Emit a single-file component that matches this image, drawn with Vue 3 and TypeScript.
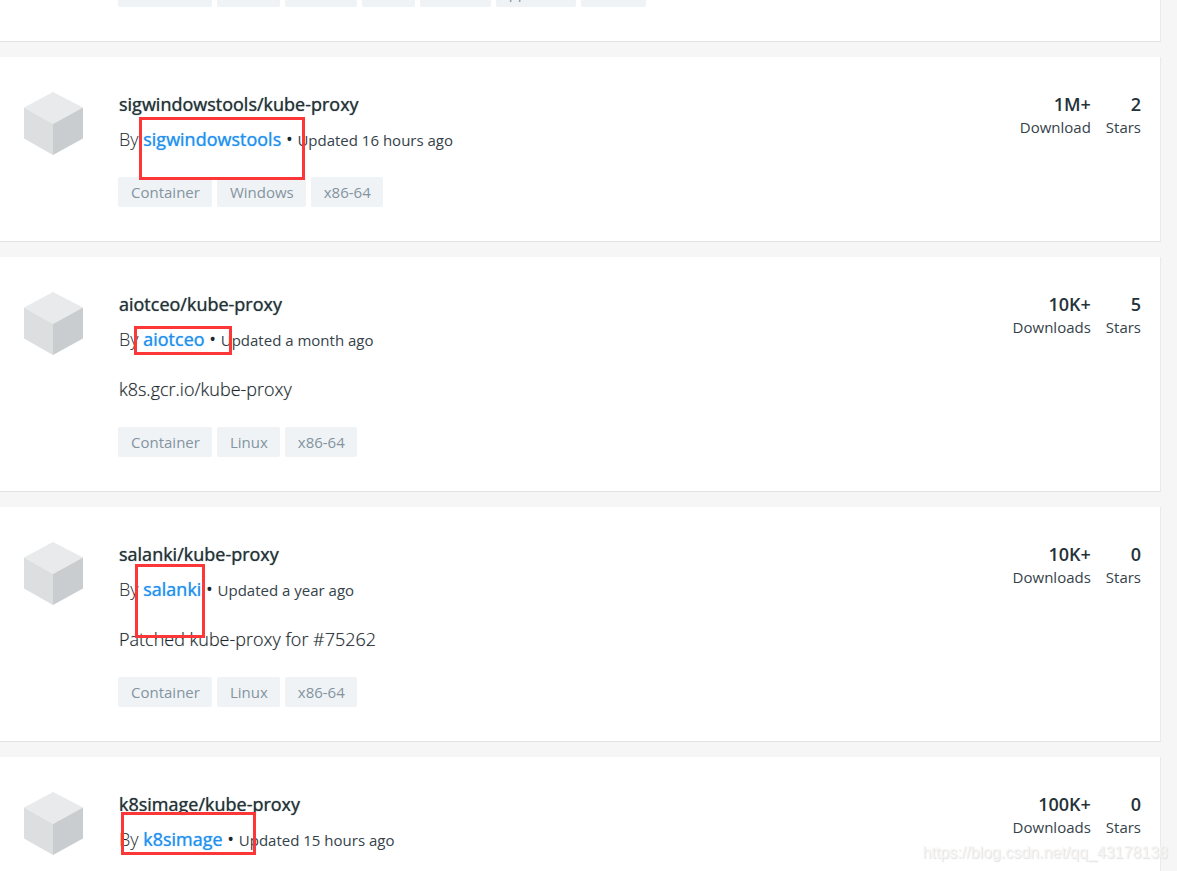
<script setup lang="ts">
interface Mark {
  left: number
  top: number
  width: number
  height: number
}

interface Repository {
  owner: string
  updated: string
  description?: string
  tags: string[]
  downloads: string
  downloadsLabel: string
  stars: number
  mark: Mark
}

const leadingTags: string[] = ['Container', 'Linux', 'x86-64', 'arm', 'arm64', 'ppc64le', 's390x']

const repositories: Repository[] = [
  {
    owner: 'sigwindowstools',
    updated: '16 hours ago',
    tags: ['Container', 'Windows', 'x86-64'],
    downloads: '1M+',
    downloadsLabel: 'Download',
    stars: 2,
    mark: { left: 139, top: 60, width: 166, height: 63 },
  },
  {
    owner: 'aiotceo',
    updated: 'a month ago',
    description: 'k8s.gcr.io/kube-proxy',
    tags: ['Container', 'Linux', 'x86-64'],
    downloads: '10K+',
    downloadsLabel: 'Downloads',
    stars: 5,
    mark: { left: 134, top: 69, width: 98, height: 29 },
  },
  {
    owner: 'salanki',
    updated: 'a year ago',
    description: 'Patched kube-proxy for #75262',
    tags: ['Container', 'Linux', 'x86-64'],
    downloads: '10K+',
    downloadsLabel: 'Downloads',
    stars: 0,
    mark: { left: 135, top: 57, width: 70, height: 74 },
  },
  {
    owner: 'k8simage',
    updated: '15 hours ago',
    tags: [],
    downloads: '100K+',
    downloadsLabel: 'Downloads',
    stars: 0,
    mark: { left: 121, top: 55, width: 135, height: 43 },
  },
]

function markStyle(mark: Mark): Record<string, string> {
  return {
    left: `${mark.left}px`,
    top: `${mark.top}px`,
    width: `${mark.width}px`,
    height: `${mark.height}px`,
  }
}
</script>

<template>
  <main class="results">
    <article class="card card-leading">
      <ul class="tags">
        <li v-for="tag in leadingTags" :key="tag" class="tag">{{ tag }}</li>
      </ul>
    </article>

    <article v-for="repo in repositories" :key="repo.owner" class="card">
      <svg class="cube" viewBox="0 0 59 63" aria-hidden="true">
        <path d="M29 0 59 15.5 29 32 0 15.5Z" fill="#e8eaec" />
        <path d="M0 15.5 29 32V63L0 46.5Z" fill="#dcdee0" />
        <path d="M59 15.5 29 32V63L59 46.5Z" fill="#cacdd0" />
      </svg>

      <div class="body">
        <h2 class="title">{{ repo.owner }}/kube-proxy</h2>
        <p class="byline">
          By <a class="owner" href="#">{{ repo.owner }}</a> <span class="dot">•</span> <span class="updated">Updated {{ repo.updated }}</span>
        </p>
        <p v-if="repo.description" class="description">{{ repo.description }}</p>
        <ul v-if="repo.tags.length" class="tags">
          <li v-for="tag in repo.tags" :key="tag" class="tag">{{ tag }}</li>
        </ul>
      </div>

      <dl class="stats">
        <div class="stat">
          <dd class="value">{{ repo.downloads }}</dd>
          <dt class="label">{{ repo.downloadsLabel }}</dt>
        </div>
        <div class="stat">
          <dd class="value">{{ repo.stars }}</dd>
          <dt class="label">Stars</dt>
        </div>
      </dl>

      <span class="mark" :style="markStyle(repo.mark)"></span>
    </article>

    <p class="watermark">https://blog.csdn.net/qq_43178138</p>
  </main>
</template>

<style>
body {
  margin: 0;
  background: #f6f6f6;
}
</style>

<style scoped>
.results {
  position: relative;
  box-sizing: border-box;
  height: 100vh;
  overflow: hidden;
  padding-right: 16px;
  background: #f6f6f6;
  color: #253238;
  font-family: "Open Sans", "Noto Sans", sans-serif;
}

.card {
  position: relative;
  display: flex;
  align-items: flex-start;
  margin-bottom: 15px;
  padding: 35px 19px 34px 24px;
  border-right: 1px solid #e9eaf0;
  border-bottom: 1px solid #e1e2e6;
  background: #fff;
}

.card-leading {
  margin-top: -23px;
  padding-top: 0;
  padding-left: 118px;
}

.cube {
  flex: none;
  width: 59px;
  height: 63px;
}

.body {
  flex: 1;
  min-width: 0;
  padding-left: 35px;
}

.title,
.byline,
.description {
  margin: 0;
  padding-left: 1px;
  font-size: 18px;
  line-height: 25px;
}

.title {
  font-weight: 400;
  text-shadow: 0 0 1px rgba(37, 50, 56, 0.8);
}

.byline {
  margin-top: 10px;
  font-weight: 300;
}

.owner {
  color: #2390ee;
  font-weight: 400;
  text-decoration: none;
  text-shadow: 0 0 1px rgba(35, 144, 238, 0.8);
}

.dot {
  font-weight: 400;
}

.updated {
  color: #35424a;
  font-size: 15px;
  font-weight: 400;
}

.byline,
.description {
  color: #1b272d;
}

.description {
  margin-top: 24px;
  font-weight: 300;
  text-shadow: 0 0 1px rgba(37, 50, 56, 0.4);
}

.tags {
  display: flex;
  flex-wrap: wrap;
  gap: 5px;
  margin: 0;
  padding: 0;
  list-style: none;
}

.body .tags {
  margin-top: 24px;
}

.description + .tags {
  margin-top: 25px;
}

.tag {
  padding: 0 12px 0 13px;
  border-radius: 2px;
  background: #eff3f6;
  color: #8493a0;
  font-size: 15px;
  line-height: 30px;
}

.stats {
  display: flex;
  gap: 15px;
  margin: 0;
  text-align: right;
}

.stat {
  display: flex;
  flex-direction: column;
}

.value {
  margin: 0;
  font-size: 18px;
  font-weight: 600;
  line-height: 25px;
}

.label {
  color: #35424a;
  font-size: 15px;
  line-height: 21px;
}

.mark {
  position: absolute;
  box-sizing: border-box;
  border: 3px solid #fd3737;
  pointer-events: none;
}

.watermark {
  position: absolute;
  right: 9px;
  bottom: 8px;
  margin: 0;
  color: #f5f5f5;
  font-family: "Liberation Sans", Arial, sans-serif;
  font-size: 16px;
  line-height: 20px;
  text-shadow: 1px 1px 1px #e0e0e0;
}
</style>
